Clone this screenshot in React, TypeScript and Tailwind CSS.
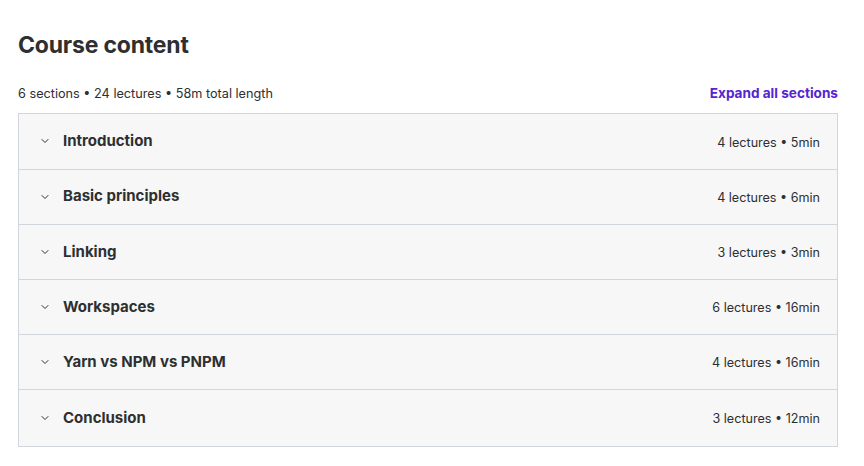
import { ChevronDown } from 'lucide-react'

type Section = {
  title: string
  lectures: number
  length: string
}

const sections: Section[] = [
  { title: 'Introduction', lectures: 4, length: '5min' },
  { title: 'Basic principles', lectures: 4, length: '6min' },
  { title: 'Linking', lectures: 3, length: '3min' },
  { title: 'Workspaces', lectures: 6, length: '16min' },
  { title: 'Yarn vs NPM vs PNPM', lectures: 4, length: '16min' },
  { title: 'Conclusion', lectures: 3, length: '12min' },
]

function SectionRow({ section }: { section: Section }) {
  return (
    <div className="flex h-[55.2px] cursor-pointer items-center justify-between border-b border-[#d1d7dc] bg-[#f7f7f8] pl-[20px] pr-[17px] last:border-b-0">
      <div className="flex items-center gap-[12px]">
        <ChevronDown size={12} strokeWidth={2} className="text-[#2d2f31]" />
        <span className="text-[15px] font-bold text-[#2d2f31]">{section.title}</span>
      </div>
      <span className="mt-[3px] text-[12.6px] text-[#2d2f31]">
        {section.lectures} lectures • {section.length}
      </span>
    </div>
  )
}

export default function App() {
  return (
    <div className="h-[466px] w-[864px] bg-white pl-[18px] pt-[30px] font-['Inter','Liberation_Sans',sans-serif] text-[#2d2f31]">
      <div className="w-[820px]">
        <h2 className="text-[23px] font-bold leading-[30px] tracking-[-0.2px]">Course content</h2>
        <div className="mt-[23px] flex items-center justify-between pb-[10px]">
          <span className="text-[12.7px]">6 sections • 24 lectures • 58m total length</span>
          <button className="text-[13.6px] font-bold text-[#5624d0]">Expand all sections</button>
        </div>
        <div className="border border-[#d1d7dc]">
          {sections.map((s) => (
            <SectionRow key={s.title} section={s} />
          ))}
        </div>
      </div>
    </div>
  )
}
